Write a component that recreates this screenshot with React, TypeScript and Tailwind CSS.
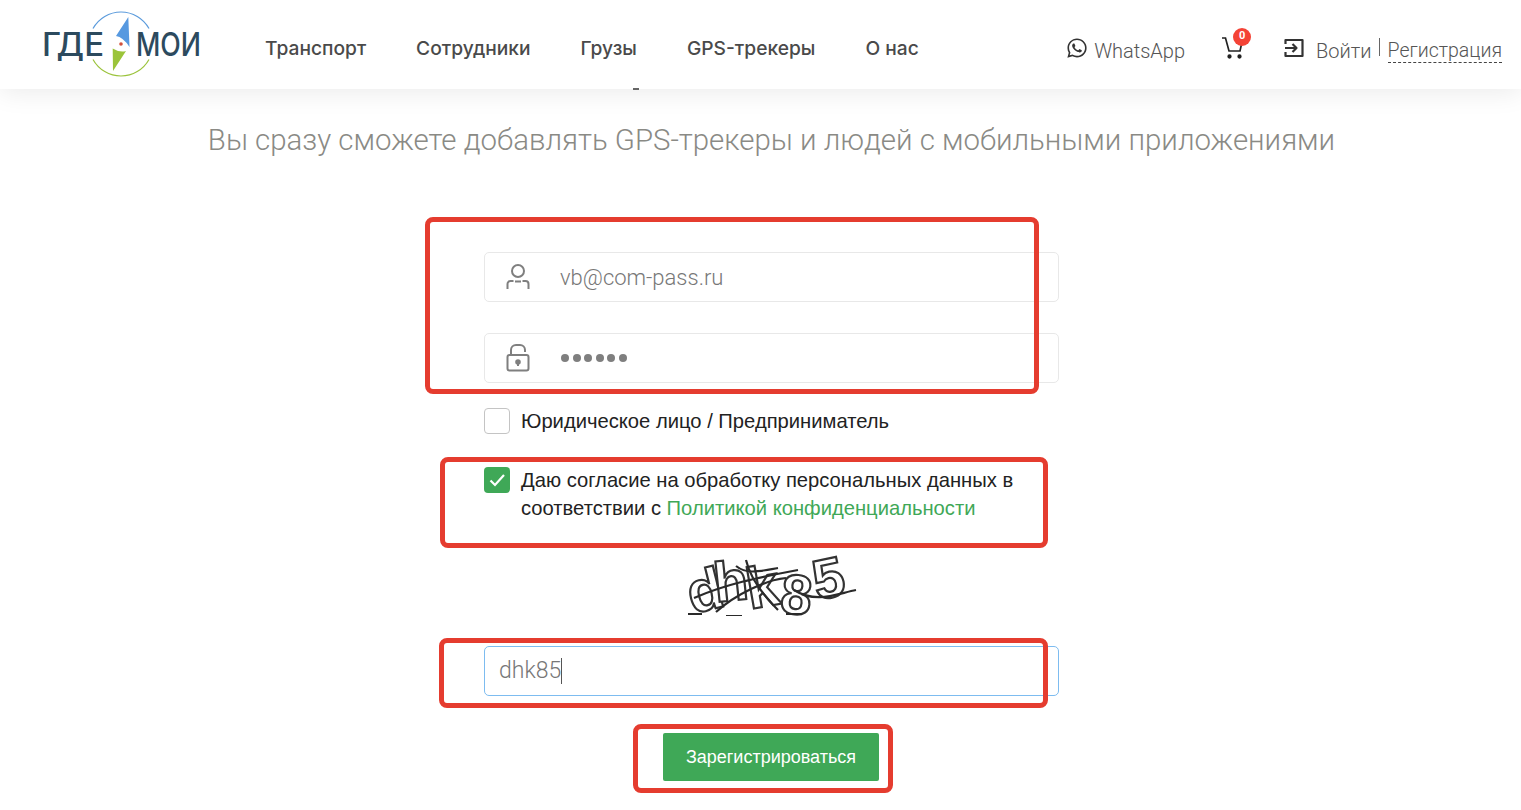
import React from "react";
import { FaWhatsapp } from "react-icons/fa";

const navItems = ["Транспорт", "Сотрудники", "Грузы", "GPS-трекеры", "О нас"];

const Logo = () => (
  <svg width="165" height="74" viewBox="40 8 165 74" className="shrink-0">
    <text x="42" y="56" fontFamily="Inter, sans-serif" fontWeight="500" fontSize="32" fill="#2c4a5e" textLength="62" lengthAdjust="spacingAndGlyphs">ГДЕ</text>
    <text x="136" y="56" fontFamily="Inter, sans-serif" fontWeight="500" fontSize="32" fill="#2c4a5e" textLength="65" lengthAdjust="spacingAndGlyphs">МОИ</text>
    <path d="M93 28.5 A32 32 0 0 1 149 28.5" fill="none" stroke="#5b9bdc" strokeWidth="1.2" />
    <path d="M93 59.5 A32 32 0 0 0 149 59.5" fill="none" stroke="#9bc33c" strokeWidth="1.2" />
    <path d="M128.3 17 L116 36 Q123 37 129.5 47 Z" fill="#5799e0" />
    <path d="M113 71 L112.7 48.5 Q120 53 126 51 Z" fill="#9bc43a" />
    <circle cx="121" cy="44" r="1.8" fill="#d1503c" />
  </svg>
);

const CartIcon = () => (
  <svg width="24" height="24" viewBox="0 0 24 24" fill="none" stroke="#222" strokeWidth="1.7">
    <path d="M1 2h3.5l3.5 13h11l2-9" />
    <circle cx="8.5" cy="20.5" r="1.3" fill="#222" />
    <circle cx="18.5" cy="20.5" r="1.3" fill="#222" />
  </svg>
);

const LoginIcon = () => (
  <svg width="20" height="20" viewBox="0 0 20 20" fill="none" stroke="#333" strokeWidth="2.2" strokeLinejoin="round">
    <path d="M1.5 6V2h17v16h-17v-4" />
    <path d="M1 10h11M8.5 6l4 4-4 4" />
  </svg>
);

const UserIcon = () => (
  <svg width="24" height="26" viewBox="0 0 24 26" fill="none" stroke="#7f7f7f" strokeWidth="2">
    <circle cx="12" cy="7" r="6" />
    <path d="M1.5 25v-5a3 3 0 0 1 3-3h3M16.5 17h3a3 3 0 0 1 3 3v5M9 17.5h6" />
  </svg>
);

const LockIcon = () => (
  <svg width="24" height="28" viewBox="0 0 24 28" fill="none" stroke="#7f7f7f" strokeWidth="2">
    <path d="M5 11V6a5 5 0 0 1 5-5h4a5 5 0 0 1 5 5v2" />
    <rect x="1.5" y="11" width="21" height="15.5" rx="2" />
    <circle cx="12" cy="18" r="1.8" fill="#7f7f7f" />
    <path d="M12 18v4" />
  </svg>
);

// captcha is a picture in the original: real letters with scribbles over them
const Captcha = () => (
  <svg width="172" height="62" viewBox="0 0 172 62" className="block blur-[0.5px]">
    <g fontFamily="'Liberation Sans', sans-serif" fontWeight="700" fill="#fff" stroke="#333" strokeWidth="2.2">
      <text x="2" y="56" fontSize="58" transform="rotate(-14 20 40)">d</text>
      <text x="28" y="46" fontSize="56" transform="rotate(-6 50 30)">h</text>
      <text x="60" y="52" fontSize="58" transform="rotate(-10 80 30)">k</text>
      <text x="96" y="60" fontSize="56" transform="rotate(6 110 30)">8</text>
      <text x="128" y="44" fontSize="56" transform="rotate(-12 140 30)">5</text>
    </g>
    <g fill="none" stroke="#2a2a2a" strokeWidth="2.2">
      <path d="M8 44 C40 30 70 24 112 16" />
      <path d="M60 6 C64 24 76 40 92 56" />
      <path d="M30 58 C50 40 80 26 100 24" />
      <path d="M108 36 C130 50 150 40 170 36" />
      <path d="M50 12 C60 20 70 18 92 14" />
      <path d="M2 60 h14 M40 62 h16 M100 60 h16" />
    </g>
  </svg>
);

const RedBox = ({ className }: { className: string }) => (
  <div className={"absolute border-[5px] border-[#e53c2f] rounded-[8px] pointer-events-none " + className} />
);

const App: React.FC = () => {
  return (
    <div className="relative h-[810px] overflow-hidden bg-white font-['Liberation_Sans',sans-serif]">
      <header className="relative z-10 h-[89px] flex items-center pl-[40px] bg-white shadow-[0_4px_24px_rgba(0,0,0,0.08)]">
        <Logo />
        <nav className="ml-[60px] flex gap-[50px] font-['Inter',sans-serif] font-medium text-[19.2px] text-[#4a4a4a] mt-[7px]">
          {navItems.map((item) => (
            <a key={item} href="#">{item}</a>
          ))}
        </nav>
        <div className="ml-auto pr-[19px] mt-[12px] flex items-center text-[20px] font-['Roboto',sans-serif] font-light text-[#555]">
          <FaWhatsapp className="text-[22px] text-[#333] mr-[6px] -mt-[6px]" />
          <span>WhatsApp</span>
          <div className="relative ml-[36px] -mt-[6px]">
            <CartIcon />
            <span className="absolute -top-[8px] left-[12px] w-[18px] h-[18px] rounded-full bg-[#f44336] text-white text-[11px] font-bold flex items-center justify-center">0</span>
          </div>
          <span className="ml-[39px] -mt-[6px]"><LoginIcon /></span>
          <span className="ml-[12px]">Войти</span>
          <span className="ml-[7px] mr-[8px] h-[18px] w-px bg-[#666] -mt-[8px]" />
          <a href="#" className="border-b border-dashed border-[#444] leading-[23px] text-[19.5px]">Регистрация</a>
        </div>
      </header>
      {/* bit of the scrolled-away title peeking out under the header */}
      <span className="absolute z-20 left-[633px] top-[88px] w-[6px] h-[2px] bg-[#666]" />

      <main className="pl-[22px] flex flex-col items-center">
        <h2 className="mt-[33px] text-[29.4px] leading-[36px] font-['Roboto',sans-serif] font-light text-[#8a8a85] whitespace-nowrap">
          Вы сразу сможете добавлять GPS-трекеры и людей с мобильными приложениями
        </h2>

        <div className="mt-[94px] w-[575px] flex flex-col">
          <div className="h-[50px] flex items-center border border-[#e8e8e8] rounded-[5px]">
            <span className="ml-[21px] w-[24px]"><UserIcon /></span>
            <span className="ml-[30px] font-['Roboto',sans-serif] font-light text-[22px] text-[#777]">vb@com-pass.ru</span>
          </div>
          <div className="mt-[31px] h-[50px] flex items-center border border-[#e8e8e8] rounded-[5px]">
            <span className="ml-[21px] w-[24px]"><LockIcon /></span>
            <span className="ml-[31px] flex gap-[3.5px]">
              {[0, 1, 2, 3, 4, 5].map((i) => (
                <span key={i} className="w-[8px] h-[8px] rounded-full bg-[#7f7f7f]" />
              ))}
            </span>
          </div>

          <label className="mt-[25px] flex items-center gap-[11px] text-[20.2px] leading-[26px] text-[#222]">
            <span className="w-[26px] h-[26px] border border-[#c4c4c4] rounded-[4px] shrink-0" />
            Юридическое лицо / Предприниматель
          </label>

          <label className="mt-[33px] flex items-start gap-[11px] text-[20.2px] leading-[28px] text-[#222]">
            <span className="w-[26px] h-[26px] rounded-[4px] bg-[#3fa857] shrink-0 flex items-center justify-center">
              <svg width="16" height="16" viewBox="0 0 16 16" fill="none" stroke="#fff" strokeWidth="2.2">
                <path d="M1.5 8.5l4.5 4.5 9-10" />
              </svg>
            </span>
            <span className="-mt-[1px]">
              Даю согласие на обработку персональных данных в соответствии с{" "}
              <a href="#" className="text-[#3fa857]">Политикой конфиденциальности</a>
            </span>
          </label>

          <div className="mt-[32px] flex justify-center"><Captcha /></div>

          <div className="mt-[30px] h-[50px] flex items-center border border-[#7dbcf0] rounded-[5px] pl-[14px] font-['Roboto',sans-serif] font-light text-[23px] text-[#777]">
            dhk85<span className="w-px h-[26px] bg-[#555]" />
          </div>

          <button className="mt-[37px] ml-[179px] w-[216px] h-[48px] bg-[#3fa857] rounded-[2px] text-white text-[18px] pt-[1px]">
            Зарегистрироваться
          </button>
        </div>
      </main>

      {/* annotation frames drawn on top of the screenshot */}
      <RedBox className="left-[425px] top-[217px] w-[614px] h-[177px]" />
      <RedBox className="left-[440px] top-[457px] w-[608px] h-[91px]" />
      <RedBox className="left-[439px] top-[638px] w-[609px] h-[70px]" />
      <RedBox className="left-[633px] top-[724px] w-[260px] h-[69px]" />
    </div>
  );
};

export default App;
